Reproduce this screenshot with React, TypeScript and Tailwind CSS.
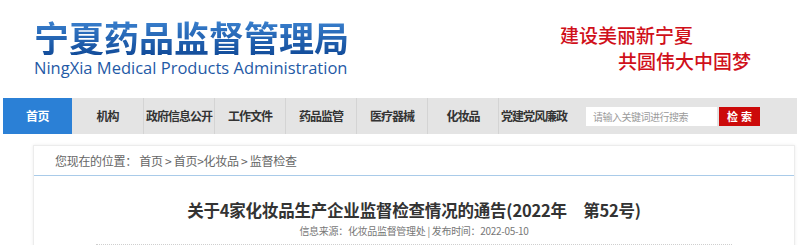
const navItems = ['机构', '政府信息公开', '工作文件', '药品监管', '医疗器械', '化妆品', '党建党风廉政'];

export default function App() {
  return (
    <div className="w-[800px] h-[245px] overflow-hidden bg-white font-['Noto_Sans_CJK_SC',sans-serif]">
      {/* Header */}
      <div className="flex h-[98px]">
        <div className="w-[560px] shrink-0 pl-[34px] pt-[19px]">
          <div className="text-[35px] leading-[36px] font-bold text-transparent bg-clip-text bg-gradient-to-b from-[#3b82d0] to-[#124c9a] w-fit">
            宁夏药品监督管理局
          </div>
          <div className="mt-[3px] text-[16.5px] leading-[20px] text-[#1f5aa6] whitespace-nowrap font-['Open_Sans','Noto_Sans_CJK_SC',sans-serif]">
            NingXia Medical Products Administration
          </div>
        </div>
        <div className="pt-[22px] text-[19px] leading-[26px] text-[#d0101a] font-medium whitespace-nowrap">
          <div>建设美丽新宁夏</div>
          <div className="pl-[58px]">共圆伟大中国梦</div>
        </div>
      </div>

      {/* Nav */}
      <div className="ml-[3px] w-[794px] h-[36px] bg-[#e4e4e4] flex items-center">
        <div className="w-[69px] shrink-0 h-full bg-[#2b80d6] text-white flex items-center justify-center text-[12px] font-bold tracking-[-0.5px]">
          首页
        </div>
        {navItems.map((item, i) => (
          <div
            key={item}
            className={`w-[71px] shrink-0 h-full flex items-center justify-center whitespace-nowrap text-[12px] font-bold text-[#333] tracking-[-1px] ${i === 0 ? '' : 'border-l border-[#d4d4d4]'}`}
          >
            {item}
          </div>
        ))}
        <div className="ml-[17px] shrink-0 flex items-center gap-[2px]">
          <div className="w-[131px] h-[19px] bg-white flex items-center pl-[7px] whitespace-nowrap text-[10px] text-[#9a9a9a] tracking-[-0.5px]">
            请输入关键词进行搜索
          </div>
          <div className="w-[41px] h-[19px] bg-[#cc0a0a] text-white flex items-center justify-center text-[11px] font-bold tracking-[3px] pl-[3px]">
            检索
          </div>
        </div>
      </div>

      {/* Content */}
      <div className="mt-[11px] ml-[33px] w-[762px] h-[200px] border border-[#ececec] shadow-[0_0_3px_rgba(0,0,0,0.08)]">
        <div className="h-[30px] border-b border-[#a9cbe9] flex items-center pl-[21px] text-[12px] text-[#666] tracking-[-0.3px]">
          您现在的位置： 首页 &gt; 首页&gt;化妆品 &gt; 监督检查
        </div>
        <div className="pt-[23px] text-center text-[16.5px] leading-[22px] font-bold text-[#333] tracking-[-0.2px]">
          关于4家化妆品生产企业监督检查情况的通告(2022年　第52号)
        </div>
        <div className="mt-[3px] text-center text-[10px] leading-[14px] text-[#777] tracking-[-0.3px]">
          信息来源：化妆品监督管理处 | 发布时间：2022-05-10
        </div>
        <div className="mt-[6px] mx-[62px] border-t border-dotted border-[#cfcfcf]" />
      </div>
    </div>
  );
}
